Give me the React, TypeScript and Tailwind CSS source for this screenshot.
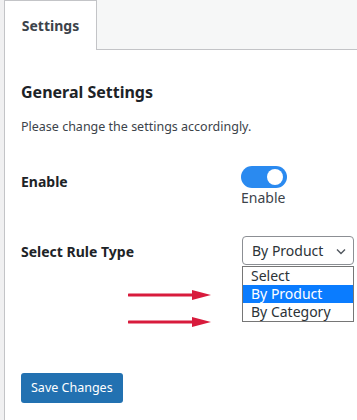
import React from 'react';

function Arrow({ className }: { className?: string }) {
  return (
    <svg width="84" height="12" viewBox="0 0 84 12" className={className}>
      <line x1="1" y1="6" x2="68" y2="6" stroke="#d81b3c" strokeWidth="3" strokeLinecap="round" />
      <polygon points="64,1 83,6 64,11" fill="#d81b3c" />
    </svg>
  );
}

export default function App() {
  return (
    <div className="w-[357px] h-[420px] bg-[#f0f0f1] pl-[4px] overflow-hidden font-['Noto_Sans',sans-serif] text-[#1d2327]">
      <div className="h-full border-l border-[#c3c4c7] bg-white flex flex-col">
        {/* Tabs */}
        <div className="flex h-[50px] bg-[#f6f7f7] border-b border-[#c3c4c7]">
          <div className="w-[92px] -mb-px bg-white border-r border-t border-[#c3c4c7] flex items-center justify-center">
            <span className="text-[14px] font-bold text-[#3c434a]">Settings</span>
          </div>
        </div>

        <div className="pl-[16px] pt-[30px] relative flex-1">
          <h2 className="text-[16px] font-bold leading-[24px]">General Settings</h2>
          <p className="text-[12.5px] text-[#3c434a] mt-[13px] leading-[20px]">
            Please change the settings accordingly.
          </p>

          <div className="flex mt-[29px]">
            <div className="w-[220px] shrink-0 pt-[5px] text-[14px] font-bold">Enable</div>
            <div className="flex flex-col">
              <div className="w-[46px] h-[22px] rounded-full bg-[#2a8af0] flex items-center justify-end pr-[4px]">
                <div className="w-[16px] h-[16px] rounded-full bg-white" />
              </div>
              <span className="text-[14px] leading-[20px] text-[#3c434a]">Enable</span>
            </div>
          </div>

          <div className="flex mt-[28px]">
            <div className="w-[221px] shrink-0 pt-[5px] text-[14px] font-bold">Select Rule Type</div>
            <div className="relative shrink-0">
              <div className="w-[112px] h-[29px] border border-[#8c8f94] rounded-[4px] flex items-center justify-between pl-[9px] pr-[6px] text-[14px] text-[#2c3338]">
                <span>By Product</span>
                <svg width="12" height="12" viewBox="0 0 12 12">
                  <path d="M2 4.5 L6 8.5 L10 4.5" fill="none" stroke="#50575e" strokeWidth="1.4" />
                </svg>
              </div>
              <div className="absolute left-0 top-[30px] w-[112px] border border-[#767676] bg-white text-[14px] leading-[18px] text-[#2c3338]">
                <div className="pl-[8px]">Select</div>
                <div className="pl-[8px] bg-[#0a7cff] text-white">By Product</div>
                <div className="pl-[8px]">By Category</div>
              </div>
            </div>
          </div>

          <div className="flex flex-col gap-[15px] ml-[107px] mt-[24px]">
            <Arrow />
            <Arrow />
          </div>

          <button className="mt-[45px] h-[30px] px-[10px] rounded-[3px] bg-[#2271b1] text-white text-[12.5px]">
            Save Changes
          </button>
        </div>
      </div>
    </div>
  );
}
